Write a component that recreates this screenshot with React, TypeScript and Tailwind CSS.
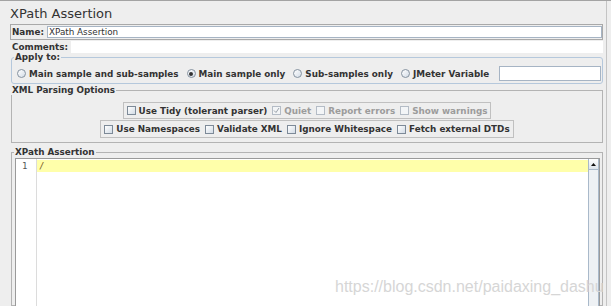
import React from "react";

function CheckBox({ label, checked = false, disabled = false }: { label: string; checked?: boolean; disabled?: boolean }) {
  return (
    <div className="flex items-center gap-[3px] shrink-0 whitespace-nowrap">
      <span
        className={
          disabled
            ? "w-[9px] h-[9px] border border-[#b4bcc6] bg-[#f3f5f7] flex items-center justify-center"
            : "w-[9px] h-[9px] border border-[#7d8a98] bg-linear-to-br from-white to-[#d3dce6] flex items-center justify-center"
        }
      >
        {checked && (
          <svg width="7" height="7" viewBox="0 0 7 7">
            <path d="M1 3.5 L3 5.5 L6 1" fill="none" stroke={disabled ? "#9aa2aa" : "#333"} strokeWidth="1" />
          </svg>
        )}
      </span>
      <span className={disabled ? "text-[#9c9c9c]" : "text-[#333]"}>{label}</span>
    </div>
  );
}

function Radio({ label, selected = false }: { label: string; selected?: boolean }) {
  return (
    <div className="flex items-center gap-[3px] shrink-0 whitespace-nowrap">
      <span className="w-[9px] h-[9px] rounded-full border border-[#8592a0] bg-linear-to-br from-white to-[#d3dce6] flex items-center justify-center">
        {selected && <span className="w-[4px] h-[4px] rounded-full bg-[#333]" />}
      </span>
      <span>{label}</span>
    </div>
  );
}

export default function App() {
  return (
    <div className="relative w-[611px] h-[306px] overflow-hidden bg-[#eeeeee] border-t border-[#a3a3a3] font-['DejaVu_Sans',sans-serif] text-[#333] text-[8.8px] font-bold leading-[10px]">
      <div className="w-[607px] h-full border-r border-[#c4c4c4] flex flex-col">
        {/* Title */}
        <div className="h-[23px] pt-[5px] pl-[10px] text-[13px] leading-[16px] font-normal">XPath Assertion</div>

        {/* Name */}
        <div className="ml-[10px] w-[593px] h-[16px] border border-[#a9a9a9] flex items-center pl-[1px] pr-[0px]">
          <span>Name:</span>
          <div className="ml-[3px] flex-1 h-[12px] border border-[#a6b4c4] bg-white font-normal leading-[10px] pl-[1px] flex items-center">
            XPath Assertion
          </div>
        </div>

        {/* Comments */}
        <div className="ml-[10px] w-[593px] h-[12px] mt-[1px] flex items-center pl-[2px]">
          <span>Comments:</span>
          <div className="ml-[3px] flex-1 h-[12px] bg-white" />
        </div>

        {/* Apply to */}
        <fieldset className="ml-[11px] w-[592px] -mt-px border border-[#b5c8dc] rounded-[3px] pl-[5px] pr-[1px] pb-[2px]">
          <legend className="px-[1px] -ml-[3px] leading-[10px]">Apply to:</legend>
          <div className="flex items-center pt-[4px] h-[19px]">
            <div className="flex items-center gap-[8px] whitespace-nowrap">
              <Radio label="Main sample and sub-samples" />
              <Radio label="Main sample only" selected />
              <Radio label="Sub-samples only" />
              <Radio label="JMeter Variable" />
            </div>
            <div className="ml-auto w-[102px] h-[15px] border border-[#a6b4c4] bg-white shrink-0" />
          </div>
        </fieldset>

        {/* XML Parsing Options */}
        <fieldset className="ml-[11px] w-[592px] mt-[1px] border border-[#b3b3b3] pb-[4px]">
          <legend className="px-[1px] -ml-[1px] leading-[10px]">XML Parsing Options</legend>
          <div className="flex flex-col items-center pt-[7px]">
            <div className="h-[17px] border border-[#c0c0c0] flex items-center gap-[5px] px-[3px]">
              <CheckBox label="Use Tidy (tolerant parser)" />
              <CheckBox label="Quiet" checked disabled />
              <CheckBox label="Report errors" disabled />
              <CheckBox label="Show warnings" disabled />
            </div>
            <div className="h-[18px] mt-[1px] border border-[#c0c0c0] flex items-center gap-[5px] px-[3px]">
              <CheckBox label="Use Namespaces" />
              <CheckBox label="Validate XML" />
              <CheckBox label="Ignore Whitespace" />
              <CheckBox label="Fetch external DTDs" />
            </div>
          </div>
        </fieldset>

        {/* XPath Assertion */}
        <fieldset className="ml-[11px] w-[592px] mt-[4px] flex-1 min-h-0 border border-[#b3b3b3] pl-[3px] pr-[2px] pt-[1px]">
          <legend className="px-[1px] -ml-[1px] leading-[10px]">XPath Assertion</legend>
          <div className="h-[200px] border border-[#9a9a9a] bg-white flex font-normal">
            <div className="w-[21px] border-r border-[#dcdcdc] font-['DejaVu_Sans_Mono',monospace] text-[9px] leading-[12px] text-[#555] pl-[6px] pt-[1px]">
              1
            </div>
            <div className="flex-1 flex flex-col">
              <div className="h-[12px] mt-[1px] bg-[#ffffaa] pl-[2px] font-['DejaVu_Sans_Mono',monospace] text-[9px] leading-[12px] text-[#7a5a20]">
                /
              </div>
            </div>
            <div className="w-[11px] border-l border-r border-[#a9b9ca] bg-[#eef1f4] flex flex-col">
              <div className="h-[11px] border-b border-[#a9b9ca] bg-linear-to-b from-white to-[#dde4ec] flex items-center justify-center">
                <svg width="5" height="3" viewBox="0 0 5 3">
                  <path d="M0 3 L2.5 0 L5 3 Z" fill="#111" />
                </svg>
              </div>
            </div>
          </div>
        </fieldset>
      </div>

      {/* watermark */}
      <div className="absolute left-[335px] top-[278px] font-['Liberation_Sans',sans-serif] font-normal text-[16px] leading-[16px] text-[#d6d6d6]">
        https://blog.csdn.net/paidaxing_dashu
      </div>
    </div>
  );
}
